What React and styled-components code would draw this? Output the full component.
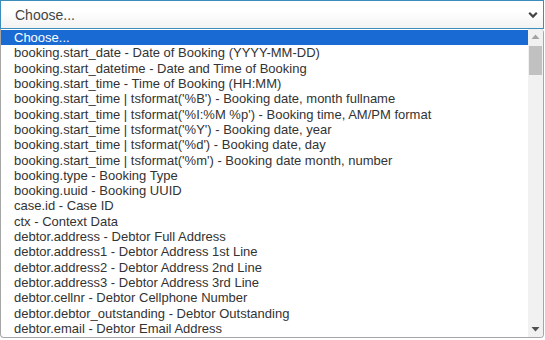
import styled, {createGlobalStyle} from "styled-components";

const GlobalStyle = createGlobalStyle`
    html, body {
        margin: 0;
        padding: 0;
        background: #fff;
    }
    body {
        font-family: "Liberation Sans", Arial, sans-serif;
    }
`;

const options = [
    "Choose...",
    "booking.start_date - Date of Booking (YYYY-MM-DD)",
    "booking.start_datetime - Date and Time of Booking",
    "booking.start_time - Time of Booking (HH:MM)",
    "booking.start_time | tsformat('%B') - Booking date, month fullname",
    "booking.start_time | tsformat('%I:%M %p') - Booking time, AM/PM format",
    "booking.start_time | tsformat('%Y') - Booking date, year",
    "booking.start_time | tsformat('%d') - Booking date, day",
    "booking.start_time | tsformat('%m') - Booking date month, number",
    "booking.type - Booking Type",
    "booking.uuid - Booking UUID",
    "case.id - Case ID",
    "ctx - Context Data",
    "debtor.address - Debtor Full Address",
    "debtor.address1 - Debtor Address 1st Line",
    "debtor.address2 - Debtor Address 2nd Line",
    "debtor.address3 - Debtor Address 3rd Line",
    "debtor.cellnr - Debtor Cellphone Number",
    "debtor.debtor_outstanding - Debtor Outstanding",
    "debtor.email - Debtor Email Address",
];

const Page = styled.div`
    width: 545px;
    height: 340px;
    display: flex;
    flex-direction: column;
    overflow: hidden;
`;

const Select = styled.div`
    height: 29px;
    box-sizing: border-box;
    margin-right: 1px;
    border: 1px solid #3c8dbc;
    background: linear-gradient(#ffffff 40%, #f2f2f2);
    display: flex;
    align-items: center;
    justify-content: space-between;
    padding: 0 5px 0 14px;
    font-size: 14px;
    color: #444;
`;

const Popup = styled.div`
    height: 309px;
    box-sizing: border-box;
    margin-right: 1px;
    border: 1px solid #a6a6a6;
    border-top: none;
    border-radius: 0 4px 4px 4px;
    display: flex;
    overflow: hidden;
    background: #fff;
`;

const List = styled.div`
    flex: 1;
    display: flex;
    flex-direction: column;
    padding-top: 1px;
`;

const Option = styled.div`
    height: 15.32px;
    line-height: 15px;
    padding-left: 13px;
    font-size: 13px;
    white-space: nowrap;
    color: ${(p) => (p.$active ? "#fff" : "#333")};
    background: ${(p) => (p.$active ? "#1a6ad4" : "transparent")};
`;

const Scrollbar = styled.div`
    width: 15px;
    background: #f1f1f1;
    display: flex;
    flex-direction: column;
    align-items: center;
`;

const ArrowBtn = styled.div`
    height: 15px;
    width: 15px;
    display: flex;
    align-items: center;
    justify-content: center;
`;

const Thumb = styled.div`
    width: 13px;
    height: 29px;
    margin-top: 2px;
    background: #c1c1c1;
`;

const Spacer = styled.div`
    flex: 1;
`;

function Chevron() {
    return (
        <svg width="10" height="8" viewBox="0 0 10 8">
            <path d="M1.2 1.8 L5 5.6 L8.8 1.8" fill="none" stroke="#444" strokeWidth="2.2" />
        </svg>
    );
}

function Tri({up}) {
    return (
        <svg width="9" height="5" viewBox="0 0 9 5">
            <path d={up ? "M0.5 5 L4.5 0.5 L8.5 5 Z" : "M0.5 0 L4.5 4.5 L8.5 0 Z"} fill={up ? "#a3a3a3" : "#505050"} />
        </svg>
    );
}

export default function App() {
    return (
        <Page>
            <GlobalStyle />
            <Select>
                <span>Choose...</span>
                <Chevron />
            </Select>
            <Popup>
                <List>
                    {options.map((o, i) => (
                        <Option key={i} $active={i === 0}>
                            {o}
                        </Option>
                    ))}
                </List>
                <Scrollbar>
                    <ArrowBtn>
                        <Tri up />
                    </ArrowBtn>
                    <Thumb />
                    <Spacer />
                    <ArrowBtn>
                        <Tri />
                    </ArrowBtn>
                </Scrollbar>
            </Popup>
        </Page>
    );
}
